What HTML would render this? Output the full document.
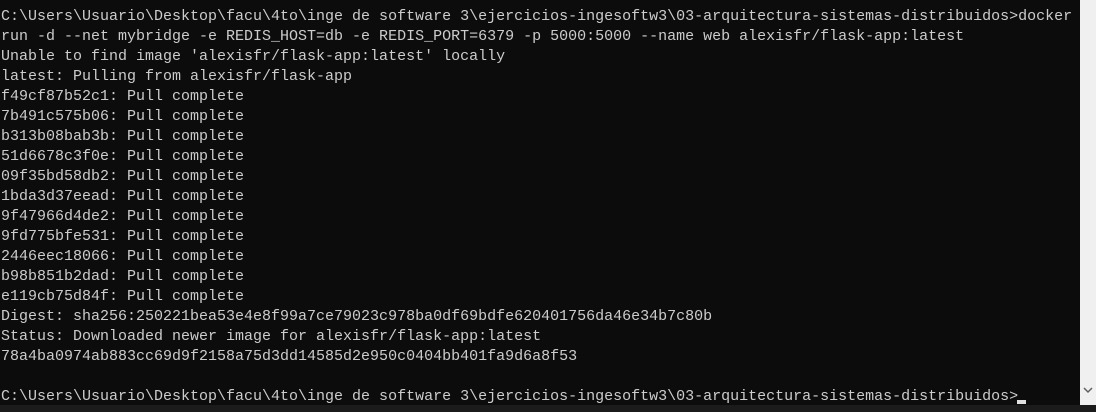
<!DOCTYPE html>
<html><head><meta name="color-scheme" content="light only"><style>
:root{color-scheme:light only}
html,body{margin:0;padding:0;background:#0c0c0c;width:1096px;height:412px;overflow:hidden;position:relative}
pre{margin:0;position:absolute;left:1px;top:7px;font-family:"Liberation Mono",monospace;font-size:15px;line-height:20px;color:#cccccc;z-index:1}
.sb{position:absolute;left:1080px;top:0;width:16px;height:405px;background-color:#f0f0f0;z-index:5}
.bot{position:absolute;left:0;top:405px;width:1096px;height:7px;background:#1b1b1b;z-index:5}
.cur{position:absolute;left:1017px;top:400px;width:9px;height:4px;background:#e0e0e0;z-index:2}
</style></head><body>
<pre>C:\Users\Usuario\Desktop\facu\4to\inge de software 3\ejercicios-ingesoftw3\03-arquitectura-sistemas-distribuidos&gt;docker
run -d --net mybridge -e REDIS_HOST=db -e REDIS_PORT=6379 -p 5000:5000 --name web alexisfr/flask-app:latest
Unable to find image 'alexisfr/flask-app:latest' locally
latest: Pulling from alexisfr/flask-app
f49cf87b52c1: Pull complete
7b491c575b06: Pull complete
b313b08bab3b: Pull complete
51d6678c3f0e: Pull complete
09f35bd58db2: Pull complete
1bda3d37eead: Pull complete
9f47966d4de2: Pull complete
9fd775bfe531: Pull complete
2446eec18066: Pull complete
b98b851b2dad: Pull complete
e119cb75d84f: Pull complete
Digest: sha256:250221bea53e4e8f99a7ce79023c978ba0df69bdfe620401756da46e34b7c80b
Status: Downloaded newer image for alexisfr/flask-app:latest
78a4ba0974ab883cc69d9f2158a75d3dd14585d2e950c0404bb401fa9d6a8f53

C:\Users\Usuario\Desktop\facu\4to\inge de software 3\ejercicios-ingesoftw3\03-arquitectura-sistemas-distribuidos&gt;</pre>
<div class="cur"></div>
<div class="sb"><svg width="16" height="405" style="display:block"><rect x="0" y="0" width="16" height="405" fill="#f0f0f0"/><path d="M4 388 L8 392 L12 388" fill="none" stroke="#606060" stroke-width="1.5"/></svg></div>
<div class="bot"></div>
</body></html>
